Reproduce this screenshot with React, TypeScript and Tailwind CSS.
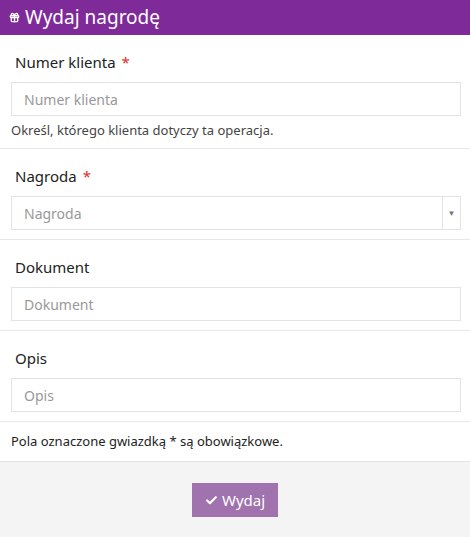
import { Check, Gift } from 'lucide-react';

const fields = [
  { label: 'Numer klienta', required: true, help: 'Określ, którego klienta dotyczy ta operacja.' },
  { label: 'Nagroda', required: true, select: true },
  { label: 'Dokument' },
  { label: 'Opis' },
];

export default function App() {
  return (
    <div className="w-[470px] h-[537px] bg-[#f4f4f4] font-['Open_Sans',sans-serif] text-[#222]">
      <div className="h-[35px] bg-[#7f2a99] flex items-center px-[9px] gap-[5px] text-white">
        <Gift className="w-[11px] h-[11px]" strokeWidth={3} />
        <span className="text-[19px] leading-none">Wydaj nagrodę</span>
      </div>
      <div className="bg-white">
        {fields.map((f) => (
          <div key={f.label} className="border-b border-[#e8e8e8] pt-4 pb-[9px] pl-[11px] pr-[9px]">
            <div className="text-[15px] leading-[22px] mb-[9px] pl-[4px]">
              {f.label}
              {f.required && <span className="text-[#e02b2b] ml-[6px]">*</span>}
            </div>
            <div className="h-[34px] border border-[#e3e3e3] flex items-center text-[14px] text-[#999]">
              <span className="flex-1 pl-[12px]">{f.label}</span>
              {f.select && (
                <span className="w-[18px] h-full border-l border-[#e3e3e3] flex items-center justify-center">
                  <span className="text-[8px] text-[#777]">▼</span>
                </span>
              )}
            </div>
            {f.help && <div className="text-[13px] leading-[18px] mt-[5px] text-[#444]">{f.help}</div>}
          </div>
        ))}
        <div className="h-[40px] flex items-center px-[11px] text-[13px] border-b border-[#e3e3e3]">
          Pola oznaczone gwiazdką * są obowiązkowe.
        </div>
      </div>
      <div className="flex justify-center pt-[21px]">
        <button className="w-[86px] h-[34px] bg-[#a072ae] text-white text-[15px] flex items-center justify-center gap-[4px]">
          <Check className="w-[13px] h-[13px]" strokeWidth={4} />
          Wydaj
        </button>
      </div>
    </div>
  );
}
